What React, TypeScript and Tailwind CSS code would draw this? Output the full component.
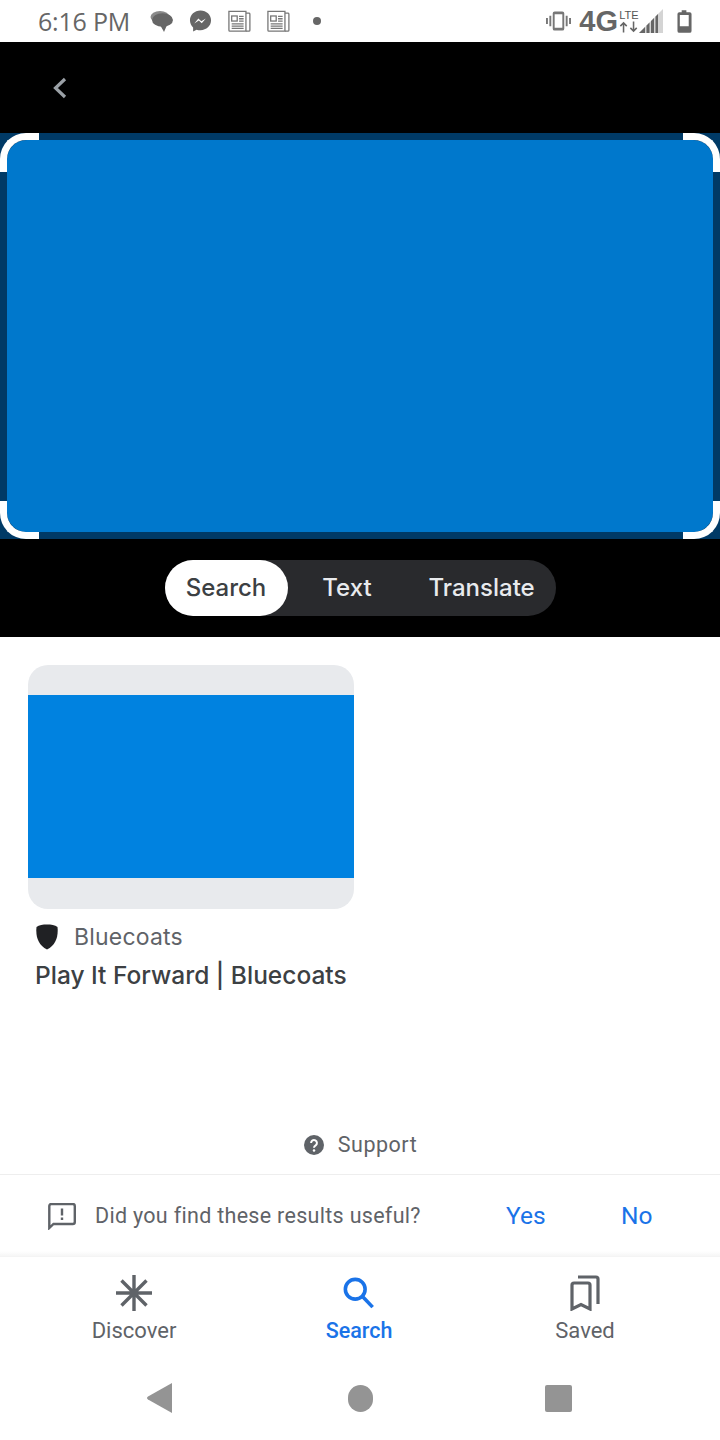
import React from "react";

const Msg = () => (
  <svg width="23" height="24" viewBox="0 0 23 24">
    <ellipse cx="10" cy="8" rx="9.500" ry="6" fill="#8a8a8a" />
    <ellipse cx="12.500" cy="11" rx="10.500" ry="6.800" fill="#666" />
    <path d="M10 16 L17 16 L14 23 Q13 21 10 16Z" fill="#666" />
  </svg>
);
const Messenger = () => (
  <svg width="23" height="24" viewBox="0 0 24 24">
    <path d="M12 1C5.800 1 1 5.400 1 11.300c0 3 1.300 5.700 3.300 7.500V23l3.600-2c1.300.4 2.600.6 4.100.6 6.200 0 11-4.400 11-10.300S18.200 1 12 1z" fill="#666" />
    <path d="M5.500 14.500l4.300-5 3 2.800 4.800-2.900-4.300 5-3-2.800z" fill="#fff" />
  </svg>
);
const News = () => (
  <svg width="23" height="25" viewBox="0 0 25 25" fill="none" stroke="#777" strokeWidth="1.400">
    <path d="M1 1.500h18.500v21.500H2a1 1 0 0 1-1-1z" />
    <path d="M19.500 3.500H23a1 1 0 0 1 .800 1V22a1 1 0 0 1-1 1h-3.300" />
    <rect x="4" y="6.500" width="6" height="5.500" />
    <path d="M12 7h5M12 9.500h5M12 12h5M4 15h13M4 17.500h13M4 20h13" />
  </svg>
);
const Vibrate = () => (
  <svg width="25" height="20" viewBox="0 0 26 20" fill="#777">
    <path d="M0 7h2v6H0zM3.500 4.500h2v11h-2zM24 7h2v6h-2zM20.500 4.500h2v11h-2z" />
    <path fillRule="evenodd" d="M9 0h8a2 2 0 0 1 2 2v16a2 2 0 0 1-2 2H9a2 2 0 0 1-2-2V2a2 2 0 0 1 2-2zm0 3v14h8V3z" />
  </svg>
);
const Signal = () => (
  <svg width="24" height="24" viewBox="0 0 24 24">
    <path d="M0 24 L24 0 V24 Z" fill="#d4d4d4" />
    <path d="M0 24 L6 18 V24Z M7.500 24V16.500L10.500 13.500V24Z M12 24V12L15 9V24Z M16.500 24V7.500L19 5V24Z" fill="#666" />
  </svg>
);
const Battery = () => (
  <svg width="15" height="23" viewBox="0 0 16 24">
    <path fillRule="evenodd" d="M5 0h5v2h3.500a2 2 0 0 1 2 2v18a2 2 0 0 1-2 2h-11a2 2 0 0 1-2-2V4a2 2 0 0 1 2-2H5zM3 5v12h9.500V5z" fill="#666" />
  </svg>
);
const Arrows = () => (
  <svg width="20" height="12" viewBox="0 0 22 12" fill="none" stroke="#666" strokeWidth="1.700">
    <path d="M5 12V2M1.500 5L5 1.500 8.500 5M16 0v10M12.500 7l3.500 3.500L19.500 7" />
  </svg>
);

const Corner = ({ cls }: { cls: string }) => (
  <div className={`absolute border-white ${cls}`} />
);

const Tab = ({ label, icon, active }: { label: string; icon: React.ReactNode; active?: boolean }) => (
  <div className="flex flex-col items-center w-[120px]">
    <div className="h-[44px] flex items-center justify-center">{icon}</div>
    <span className={`mt-[2px] leading-[28px] font-['Roboto',sans-serif] ${active ? "text-[21.500px] text-[#1a73e8] font-medium" : "text-[22px] text-[#5f6368]"}`}>{label}</span>
  </div>
);

export default function App() {
  return (
    <div className="w-[720px] h-[1440px] bg-white flex flex-col overflow-hidden font-['Roboto',sans-serif]">
      <div className="h-[42px] flex items-center justify-between pl-[38px] pr-[28px] shrink-0">
        <div className="flex items-center">
          <span className="text-[25px] leading-none text-[#666] font-['Open_Sans',sans-serif] w-[112px] tracking-[-0.2px]">6:16 PM</span>
          <div className="flex items-center gap-[16px]">
            <Msg />
            <Messenger />
            <News />
            <News />
          </div>
          <div className="w-[8px] h-[8px] rounded-full bg-[#666] ml-[23px]" />
        </div>
        <div className="flex items-center">
          <Vibrate />
          <span className="text-[29px] leading-none font-bold text-[#666] ml-[8px] font-['Liberation_Sans',sans-serif]">4G</span>
          <div className="flex flex-col items-center w-[22px]">
            <span className="text-[11px] leading-[11px] text-[#555] font-['Liberation_Sans',sans-serif]">LTE</span>
            <Arrows />
          </div>
          <div className="ml-[-1px] flex"><Signal /></div>
          <div className="ml-[14px] flex"><Battery /></div>
        </div>
      </div>

      <div className="h-[91px] bg-black flex items-center pl-[46px] shrink-0">
        <svg width="28" height="28" viewBox="0 0 28 28" fill="none" stroke="#9aa0a6" strokeWidth="3.200">
          <path d="M19 5 L9.500 14 L19 23" />
        </svg>
      </div>

      <div className="relative h-[406px] bg-[#003a66] p-[7px] shrink-0">
        <div className="h-full bg-[#0078cc] rounded-[20px]" />
        <Corner cls="w-[39px] h-[39px] left-0 top-0 border-l-[7px] border-t-[7px] rounded-tl-[26px]" />
        <Corner cls="w-[37px] h-[39px] right-0 top-0 border-r-[7px] border-t-[7px] rounded-tr-[26px]" />
        <Corner cls="w-[39px] h-[38px] left-0 bottom-0 border-l-[7px] border-b-[7px] rounded-bl-[26px]" />
        <Corner cls="w-[37px] h-[38px] right-0 bottom-0 border-r-[7px] border-b-[7px] rounded-br-[26px]" />
      </div>

      <div className="h-[98px] bg-black flex items-center justify-center shrink-0">
        <div className="w-[391px] h-[56px] rounded-full bg-[#292a2d] flex items-center text-[24px] font-medium font-['Inter',sans-serif]">
          <div className="w-[123px] h-full rounded-full bg-white text-[#3c4043] flex items-center justify-center">Search</div>
          <div className="w-[119px] text-center text-[#e8eaed]">Text</div>
          <div className="ml-[22px] text-[#e8eaed]">Translate</div>
        </div>
      </div>

      <div className="flex-1 flex flex-col min-h-0">
        <div className="pl-[28px] pt-[28px]">
          <div className="w-[326px] h-[244px] rounded-[20px] bg-[#e8eaed] flex items-center overflow-hidden">
            <div className="w-full h-[183px] bg-[#0082e0] mt-[-1px]" />
          </div>
        </div>
        <div className="pl-[36px] mt-[14px] flex items-center h-[28px]">
          <svg width="22" height="26" viewBox="0 0 22 26" className="shrink-0">
            <path d="M11 0.500C15 0.500 19 1 21.500 3C22.500 12 20 21 11 25.500C2 21 -0.500 12 0.500 3C3 1 7 0.500 11 0.500Z" fill="#202124" />
          </svg>
          <span className="ml-[16px] text-[23px] leading-none text-[#5f6368] font-['Inter',sans-serif] tracking-[0.2px]">Bluecoats</span>
        </div>
        <div className="pl-[35px] mt-[8px] text-[24.500px] leading-[32px] text-[#3c4043] font-medium font-['Inter',sans-serif]">Play It Forward | Bluecoats</div>

        <div className="mt-[140px] flex items-center justify-center h-[28px] pl-[1px]">
          <svg width="20" height="20" viewBox="0 0 24 24">
            <circle cx="12" cy="12" r="12" fill="#5f6368" />
            <path d="M8.500 9.500a3.500 3.500 0 1 1 5.500 2.900c-1.300.9-2 1.500-2 2.900" fill="none" stroke="#fff" strokeWidth="2.400" />
            <circle cx="12" cy="18.500" r="1.500" fill="#fff" />
          </svg>
          <span className="ml-[14px] text-[21.500px] leading-none text-[#5f6368] tracking-[0.5px]">Support</span>
        </div>
        <div className="mt-[15px] h-[77px] pt-[6px] border-t border-[#eeeeee] flex items-center pl-[48px] shrink-0">
          <svg width="28" height="27" viewBox="0 0 28 27" fill="none" className="shrink-0">
            <path d="M1.300 25V3a2 2 0 0 1 2-2h21.500a2 2 0 0 1 2 2v16a2 2 0 0 1-2 2H5.500z" stroke="#5f6368" strokeWidth="2.400" />
            <path d="M14 5.500v7M14 14.500v2.500" stroke="#5f6368" strokeWidth="2.400" />
          </svg>
          <span className="ml-[19px] w-[411px] text-[21.500px] leading-none text-[#5f6368] tracking-[0.3px]">Did you find these results useful?</span>
          <span className="text-[24.500px] leading-none text-[#1a73e8] w-[115px]">Yes</span>
          <span className="text-[24.500px] leading-none text-[#1a73e8]">No</span>
        </div>
        <div className="h-[5px] bg-gradient-to-b from-[#ffffff] to-[#f6f6f6] shrink-0" />

        <div className="flex-1 flex flex-col border-t border-[#f4f4f4]">
          <div className="flex pt-[14px]">
            <div className="flex w-full pl-[74px]">
              <Tab label="Discover" icon={
                <svg width="36" height="36" viewBox="0 0 36 36" stroke="#5f6368" strokeWidth="3.400" fill="none">
                  <path d="M18 0v36M0 18h36M5.500 5.500l25 25M30.500 5.500l-25 25" />
                </svg>
              } />
              <div className="ml-[105px]"><Tab label="Search" active icon={
                <svg width="32" height="32" viewBox="0 0 34 34" stroke="#1a73e8" strokeWidth="3.800" fill="none">
                  <circle cx="13" cy="13" r="10.500" />
                  <path d="M20.500 20.500L31.500 32" />
                </svg>
              } /></div>
              <div className="ml-[106px]"><Tab label="Saved" icon={
                <svg width="30" height="36" viewBox="0 0 30 36" stroke="#5f6368" strokeWidth="3.200" fill="none">
                  <path d="M2 34V10a2 2 0 0 1 2-2h14a2 2 0 0 1 2 2v24l-9-4.500z" />
                  <path d="M8 2h18a2 2 0 0 1 2 2v25" />
                </svg>
              } /></div>
            </div>
          </div>
          <div className="flex items-center h-[56px] mt-[25px] pl-[146px]">
            <svg width="26" height="30" viewBox="0 0 26 30"><path d="M26 0 V30 L2 16.500 Q0 15 2 13.500Z" fill="#949494" /></svg>
            <div className="w-[25px] h-[27px] rounded-full bg-[#949494] ml-[176px]" />
            <div className="w-[27px] h-[27px] rounded-[2px] bg-[#949494] ml-[172px]" />
          </div>
        </div>
      </div>
    </div>
  );
}
